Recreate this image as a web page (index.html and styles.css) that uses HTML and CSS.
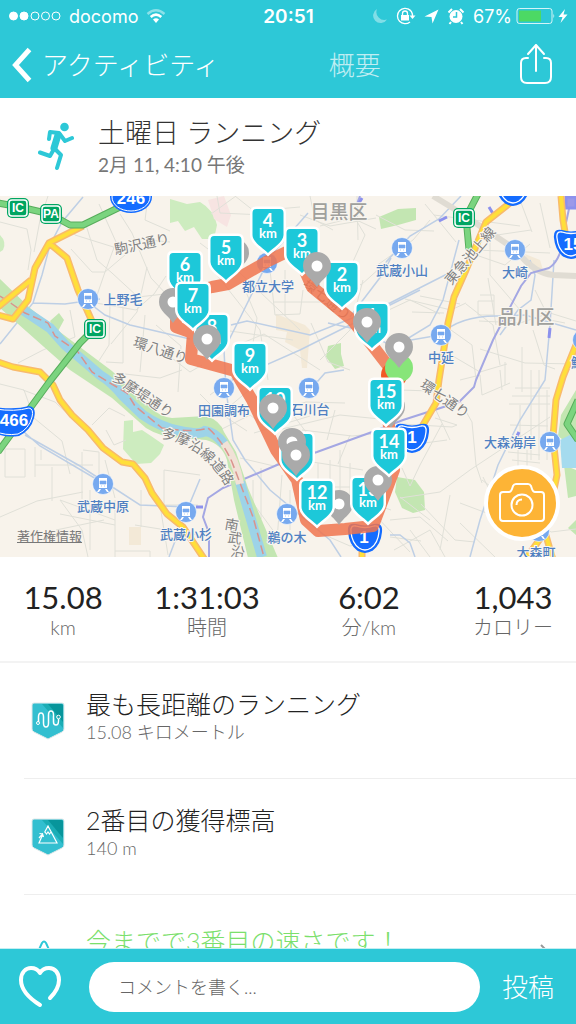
FILE: index.html
```html
<!DOCTYPE html>
<html lang="ja">

<head>
    <meta charset="UTF-8">
    <meta name="viewport" content="width=device-width, initial-scale=1.0">
    <title>土曜日 ランニング</title>
    <link rel="stylesheet" href="styles.css">
</head>

<body>
    <header class="top">
        <div class="status">
            <div class="status-left">
                <svg width="52" height="12" viewBox="0 0 52 12" fill="none" stroke="#fff">
                    <g fill="#fff"><circle cx="4.5" cy="6" r="4"/><circle cx="15" cy="6" r="4"/></g>
                    <circle cx="26" cy="6" r="4"/><circle cx="36.500" cy="6" r="4"/><circle cx="47" cy="6" r="4"/>
                </svg>
                <span>docomo</span>
                <svg width="20" height="16" viewBox="0 0 20 16" fill="none" stroke="#fff" stroke-width="2.500">
                    <path d="M1.500 6Q10-1.500 18.500 6" opacity=".45"/>
                    <path d="M4.700 9Q10 4.300 15.300 9"/>
                    <path d="M7 11.500Q10 9 13 11.500L10 15Z" fill="#fff" stroke="none"/>
                </svg>
            </div>
            <time class="clock">20:51</time>
            <div class="status-right">
                <svg width="16" height="16" viewBox="0 0 16 16"><path d="M5 1A7.500 7.500 0 1 0 15 11.500A8 8 0 0 1 5 1Z" fill="#fff" opacity=".4"/></svg>
                <svg width="20" height="18" viewBox="0 0 20 18" fill="none" stroke="#fff" stroke-width="1.300">
                    <path d="M14 3A7.700 7.700 0 1 0 14 15M12 1.800A7.700 7.700 0 0 1 16.500 9"/>
                    <path d="M13.500 8.500H19.500L16.500 12Z" fill="#fff" stroke="none"/>
                    <rect x="5" y="8" width="8" height="5.500" fill="#fff" stroke="none"/>
                    <path d="M6.500 8V6.500A2.500 2.500 0 0 1 11.500 6.500V8"/>
                </svg>
                <svg width="15" height="15" viewBox="0 0 15 15"><path d="M14.500 .5L8.500 14.500L7.500 8L.5 7.500Z" fill="#fff"/></svg>
                <svg width="18" height="18" viewBox="0 0 18 18">
                    <circle cx="9" cy="9.500" r="6.500" fill="#fff"/>
                    <path d="M1.500 5.500L5 2M16.500 5.500L13 2M4 15L2.500 17M14 15L15.500 17" stroke="#fff" stroke-width="2"/>
                    <path d="M9.500 5V10H6" stroke="#2dc8d7" stroke-width="1.500" fill="none"/>
                </svg>
                <span>67%</span>
                <svg width="52" height="18" viewBox="0 0 52 18">
                    <rect x="1" y="1.500" width="35" height="15" rx="2.500" fill="none" stroke="#fff" stroke-opacity=".8"/>
                    <rect x="3" y="3.500" width="22" height="11" fill="#4cd964"/>
                    <path d="M37.500 6.500Q39 9 37.500 11.500Z" fill="#fff"/>
                    <path d="M49 2L42.500 10H46.500L44.500 16L51.500 7.500H47.500Z" fill="#fff"/>
                </svg>
            </div>
        </div>
        <nav class="nav">
            <a class="back" href="#">
                <svg width="20" height="36" viewBox="0 0 20 36"><path d="M17.500 2.500L3.500 18L17.500 33.500" fill="none" stroke="#fff" stroke-width="5"/></svg>
                アクティビティ
            </a>
            <h1>概要</h1>
            <button class="share" aria-label="共有">
                <svg width="32" height="44" viewBox="0 0 32 44" fill="none" stroke="#fff" stroke-width="2" stroke-linecap="round" stroke-linejoin="round">
                    <path d="M8 15H6Q1 15 1 20V34Q1 40 7 40H25Q31 40 31 34V20Q31 15 26 15H24M16 28V2M8 11L16 2L24 11"/>
                </svg>
            </button>
        </nav>
    </header>

    <main>
        <section class="title">
            <svg width="36" height="50" viewBox="0 0 36 50" fill="none" stroke="#2dc8d7" stroke-width="4" stroke-linecap="round" stroke-linejoin="round">
                <circle cx="26.500" cy="5" r="4.300" fill="#2dc8d7" stroke="none"/>
                <path d="M11 17L12 10L21 11L27 19L34 16M16 26L23 33L19 46M16 27L12 34L2 30.500"/>
                <path d="M20 13L16 26" stroke-width="7"/>
            </svg>
            <div>
                <h2>土曜日 ランニング</h2>
                <p>2月 11, 4:10 午後</p>
            </div>
        </section>

        <section class="map">
            <svg class="map-img" viewBox="0 196 576 361">
                <defs>
                    <path id="shield" d="M-12 0H12Q15.500 0 15.500 4V26C15.500 33 5 39 0 44C-5 39-15.500 33-15.500 26V4Q-15.500 0-12 0Z"/>
                    <g id="pin">
                        <path d="M0-14A14 14 0 0 1 14 0C14 9 5 13 0 21C-5 13-14 9-14 0A14 14 0 0 1 0-14Z" fill="#aaa"/>
                        <circle r="5.500" fill="#fff"/>
                    </g>
                    <g id="train">
                        <circle r="10.500" fill="#77a9ef" stroke="#fff" stroke-opacity=".6"/>
                        <path d="M-4-6H4V4H-4ZM-4 5L-6 8H-4L-2 5ZM4 5L6 8H4L2 5Z" fill="#fff"/>
                        <path d="M-3-3H3V0H-3ZM-2 2H-1M1 2H2" fill="#77a9ef" stroke="#77a9ef" stroke-width=".6"/>
                    </g>
                    <g id="exit">
                        <rect x="-11" y="-10" width="22" height="20" rx="5" fill="#00a562"/>
                        <rect x="-9" y="-8" width="18" height="16" rx="3" fill="none" stroke="#fff" stroke-width="1.500"/>
                    </g>
                    <g id="route">
                        <path d="M-9-13Q0-10 9-13Q17-15 16-6Q15 6 7 12Q0 16-7 12Q-15 6-16-6Q-17-15-9-13Z" fill="#146cff" stroke="#146cff" stroke-width="2"/>
                        <path d="M-9-12Q0-9 9-12Q15-13 14-6Q13 5 6 10Q0 14-6 10Q-13 5-14-6Q-15-13-9-12Z" fill="none" stroke="#fff" stroke-width="1.300"/>
                    </g>
                    <path id="riverside" d="M161 438Q200 444 224 483"/>
                </defs>
                <rect y="196" width="576" height="361" fill="#f8f3eb"/>

                <!-- parks -->
                <g fill="#cdecbf">
                    <path d="M170 199L187 204L200 202Q214 210 217 225L214 239H202L194 227L185 231L178 221L170 223Z"/>
                    <path d="M124 421L133 420V432L142 430L151 436L164 445L160 454L151 463L136 464L123 449Z"/>
                    <path d="M0 235Q7 242 3 250L0 252Z"/>
                </g>
                <g fill="#c3e6b2">
                    <path d="M379 217L398 209L416 208V220L398 225L381 229Z"/>
                    <path d="M328 346L341 343V354L344 366L335 369L326 357Z"/>
                    <path d="M397 477L415 480L424 492L425 510L413 513L402 508L395 492Z"/>
                    <path d="M564 465L576 470V496L568 498ZM576 390V450L558 436L561 415ZM568 528L576 520V535ZM50 321L59 313L64 320L57 333Z"/>
                </g>
                <path d="M276 314L305 325L310 330L307 368H302L300 350L285 342L287 332L276 330ZM525 254L540 260L544 273L528 267ZM129 527H141V545H129Z" fill="#f3e9d7"/>
                <path d="M560 440L576 432V468H562Z" fill="#a5dbee"/>
                <path d="M208 200L224 196L231 215L227 227L214 219Z" fill="#f7e4e2"/>

                <!-- minor streets -->
                <g fill="none" stroke="#e0e0d8" stroke-width="1">
                    <path d="M0 222L27 229L31 250L28 270M60 212L75 235L123 250L137 239L170 242M86 225L97 260L112 273L138 297L200 290M99 204L116 242L105 272L95 301M120 214L132 233L151 278L170 298M48 196L40 220L34 252M148 196L145 220L170 231M71 249L92 272L105 272L132 249"/>
                    <path d="M96 303L136 310L154 294L166 276M110 304L109 345L93 370M123 306V363L106 362M147 267L137 312L111 344M70 310L75 337L43 350L18 363M125 374L160 378L182 370M145 315L140 372M168 355L190 372L202 365M156 325L181 346L178 392"/>
                    <path d="M0 384L24 390L34 418L62 441L70 474M23 390L55 402L72 418M92 425L109 408L125 416M106 430L114 445L126 440M5 449H25V477H5ZM35 447V477M41 460V450M35 465H93M52 467V501M83 450L99 452V483M82 452V499M37 501L0 517M37 501L83 492M60 500L82 530L88 557M60 514L115 525M60 500L115 520M56 530L104 520M115 500V557M115 551H150V557M90 490V550M105 460L115 498M164 470L200 475M164 470V505H198M141 490V527M160 505L168 555M135 525L198 535"/>
                    <path d="M217 196L220 213L263 215M235 196L254 211L300 207M211 214L236 196M200 243L240 273L300 330M217 275L260 330L268 380M190 315L230 331L293 340M243 285L257 318L253 343M270 270L275 315L300 314L303 290M273 302H346M285 270V316M311 323L328 362L350 370M300 215L330 226L376 218M350 210L365 235L351 266L327 275M320 226L352 218L376 229M310 196L315 220L333 230M357 196L358 240M320 360L350 330L363 280M332 263L361 285L391 258"/>
                    <path d="M240 344L264 334L320 370M243 370L210 395M200 394L218 412L247 431M260 416L306 402L345 403M285 404L312 440M282 429L340 415L390 420M220 430L250 415L266 427M224 411L260 381M302 430L352 436L393 432M254 433L310 416M240 458L274 466L296 450M300 460L363 470M330 460V515M340 450V520M350 463V510M318 487H370M330 500H375M347 495L391 510M253 480V503L280 540M261 468V519M282 475L277 540M290 490V530M318 463V480M350 435L338 464M335 410L327 440M320 533L350 546L375 540M390 537L421 541M375 515L410 552M400 498L440 492L470 470L550 417M410 530L430 557M394 550L430 530L445 557"/>
                    <path d="M376 215L405 230L434 231M376 266L413 240L430 220M434 215L520 226M425 204L456 242M376 316L410 300L440 314M405 299L451 310L466 303M420 296L460 304M412 312L444 313M476 255L505 265L530 244M490 230V275L520 310M475 250L550 253M480 295H494V315H478V301H494M479 321L520 323L550 313L576 321M488 278L496 325M451 330L472 345L476 380M466 304L493 325L500 365M480 349L525 363L576 364M505 362V385M522 347V392M451 355L480 372L507 364M497 235L531 230M540 203L550 248M520 200L532 232M535 290L550 320L565 323M533 330L544 365L555 369"/>
                    <path d="M400 390L431 391L460 401L472 422L476 465L482 483M435 418L457 425L452 427L402 424M442 424L420 465L410 486L402 468M402 446L447 440M434 406L450 440M482 480L551 532L576 529M483 477L493 497M460 380L480 375L482 395L510 383M500 370L502 390M515 388H550M512 396H550M509 404H550M531 370V460M539 370V460M547 390V460M520 405V446M510 425L548 426M508 452L540 455M512 460L540 463M518 450V466M527 450V468M400 497L430 520M450 495L440 550M460 503L492 515M421 504L455 540L475 542M460 523L495 557M390 520L420 517L448 541"/>
                </g>
                <g fill="none" stroke="#becfe5" stroke-width="1.500">
                    <path d="M83 197L62 222L50 245L42 275L33 303L0 344M33 303L65 304L100 299M88 302L105 315L130 325L190 339M0 411L40 446L103 483M25 435L80 466L140 505L188 507M169 557L185 515L200 479"/>
                    <path d="M308 213L293 230L270 257L240 318L224 350L226 390L233 440L245 460L270 490L330 540L341 557M231 325L247 321L310 335L390 303L451 272M232 380L300 350L420 290M350 317L382 275L391 258M310 390L325 373L344 370M328 323L360 330L388 344L440 335"/>
                    <path d="M461 196L439 219L410 236L386 262M459 240L443 300L430 325L402 342M440 335Q460 315 500 316L525 315L576 330M530 260L535 275L531 300L518 310L500 335M554 260L550 325L545 380L520 420L498 465L480 520L470 557M390 535H400L410 543L415 557"/>
                </g>

                <!-- rail -->
                <path d="M433 196L456 210L486 230Q500 239 516 250Q533 273 553 275L576 276" fill="none" stroke="#e0dcd3" stroke-width="6"/>
                <path d="M572 196Q565 225 561 250Q557 263 549 268L531 273L521 286L493 340L476 380L474 387L459 402L403 420L372 432L317 452L277 465L223 488L208 498L203 517L209 533V557M360 196L357 204" fill="none" stroke="#a4a7e3" stroke-width="2"/>
                <path d="M566 197H576V208H566ZM362 198L359 203M439 221L447 217M489 207L495 217M550 328L549 338M519 432L516 438M196 507H203" fill="#9b99e9" stroke="#8c91ed" stroke-width="3"/>

                <!-- river -->
                <path d="M-2 277L30 308L60 332L112 371L150 407Q160 417 172 418L205 416Q220 420 224 432L236 452L248 488L278 558H248L234 500L227 460Q222 444 206 440L180 438Q160 437 146 428L112 398L70 370L0 308Z" fill="#c3e6b2"/>
                <g fill="none">
                    <path d="M20 308L50 328L65 345L100 375Q112 382 123 396L143 415Q160 427 180 431T205 431Q215 432 224 444M240 482L262 557" stroke="#9dd3e8" stroke-width="10"/>
                    <path d="M224 443Q236 460 240 484" stroke="#f1e1d6" stroke-width="8"/>
                    <path d="M0 296L12 304L25 313L48 323L55 336L78 352L92 372L110 383L127 393L135 406L162 428Q195 433 208 428Q222 440 232 462L253 517L264 557" stroke="#d9938d" stroke-width="1.500" stroke-dasharray="9 4"/>
                </g>

                <!-- trunk roads -->
                <g fill="none" stroke-linejoin="round">
                    <path d="M83 226L49 243L35 268L28 300L13 319L-2 315M49 243L67 258L78 290L95 328M31 280L-2 307M-2 362L13 367L40 372L53 385L60 400L72 415L88 430L103 448L122 462L133 464L145 478L152 493L167 514L183 527L205 560M515 199L486 222L466 270L454 297L448 323L439 380L436 403L420 430M561 196L563 220L568 250M578 340L563 377L556 400L553 437L557 475L545 532L553 560M545 532L527 557M362 540V560" stroke="#f8ba6c" stroke-width="7"/>
                    <path d="M83 226L49 243L35 268L28 300L13 319L-2 315M49 243L67 258L78 290L95 328M31 280L-2 307M-2 362L13 367L40 372L53 385L60 400L72 415L88 430L103 448L122 462L133 464L145 478L152 493L167 514L183 527L205 560M515 199L486 222L466 270L454 297L448 323L439 380L436 403L420 430M561 196L563 220L568 250M578 340L563 377L556 400L553 437L557 475L545 532L553 560M545 532L527 557M362 540V560" stroke="#ffdf3a" stroke-width="4"/>
                    <path d="M-2 203L20 207L50 214L70 225H83L120 207L138 196M95 328L80 343L50 381L-2 452M478 194L466 217L469 250M578 400L567 424L578 440" stroke="#58ad5c" stroke-width="7"/>
                    <path d="M-2 203L20 207L50 214L70 225H83L120 207L138 196M95 328L80 343L50 381L-2 452M478 194L466 217L469 250M578 400L567 424L578 440" stroke="#7bd47f" stroke-width="5"/>
                </g>

                <!-- signs -->
                <use href="#exit" x="18" y="208"/><use href="#exit" x="51" y="214"/><use href="#exit" x="95" y="329"/><use href="#exit" x="464" y="218"/>
                <g class="sign">
                    <text x="18" y="212">IC</text><text x="51" y="218">PA</text><text x="95" y="333">IC</text><text x="464" y="222">IC</text>
                </g>
                <ellipse cx="131" cy="197" rx="21" ry="16" fill="#146cff"/>
                <ellipse cx="131" cy="197" rx="19" ry="14" fill="none" stroke="#fff"/>
                <path d="M-5 407Q15 410 29 406Q37 407 34 418Q31 430 19 436Q5 438-5 433Z" fill="#146cff"/>
                <path d="M-5 409Q15 412 29 408Q34 409 32 417Q29 429 18 434Q5 436-5 431Z" fill="none" stroke="#fff"/>
                <use href="#route" x="412" y="438"/><use href="#route" x="513" y="191"/><use href="#route" x="571" y="244"/>
                <g class="num"><text x="131" y="204">246</text><text x="14" y="426">466</text><text x="412" y="443">1</text><text x="573" y="250">15</text></g>

                <!-- stations -->
                <use href="#train" x="402" y="248"/><use href="#train" x="515" y="250"/><use href="#train" x="441" y="335"/><use href="#train" x="583" y="340"/>
                <use href="#train" x="88" y="299"/><use href="#train" x="103" y="484"/><use href="#train" x="186" y="512"/><use href="#train" x="224" y="388"/>
                <use href="#train" x="309" y="388"/><use href="#train" x="287" y="514"/><use href="#train" x="267" y="263"/><use href="#train" x="550" y="442"/><use href="#train" x="539" y="531"/>
                <g class="station">
                    <text x="402" y="275">武蔵小山</text><text x="515" y="277">大崎</text><text x="441" y="362">中延</text><text x="123" y="304">上野毛</text>
                    <text x="103" y="511">武蔵中原</text><text x="186" y="539">武蔵小杉</text><text x="224" y="415">田園調布</text><text x="310" y="414">石川台</text>
                    <text x="287" y="542">鵜の木</text><text x="268" y="291">都立大学</text><text x="510" y="447">大森海岸</text><text x="536" y="557">大森町</text><text x="584" y="367">鮫洲</text>
                </g>
                <g class="district"><text x="339" y="219">目黒区</text><text x="526" y="324">品川区</text></g>
                <g class="street">
                    <text transform="translate(143 249) rotate(-12)">駒沢通り</text>
                    <text transform="translate(159 355) rotate(18)">環八通り</text>
                    <text transform="translate(140 399) rotate(34)">多摩堤通り</text>
                    <text transform="translate(442 403) rotate(35)">環七通り</text>
                    <text transform="translate(474 259) rotate(-50)">東急池上線</text>
                    <text transform="translate(324 303) rotate(40)">環七通り</text>
                    <text class="along"><textPath href="#riverside">多摩沿線道路</textPath></text>
                    <text transform="translate(231 530) rotate(10)">南</text>
                    <text transform="translate(234 543) rotate(10)">武</text>
                    <text transform="translate(237 557) rotate(10)">沿</text>
                </g>

                <!-- the run -->
                <use href="#route" x="365" y="538"/>
                <g class="num"><text x="364" y="543">1</text></g>
                <path d="M399 380L372 345L352 320L312 287L295 248L268 261L228 284L212 287L176 296V327L193 333L191 359L235 371L252 400L276 450L297 480L306 520L318 531L345 529L373 526L394 470L386 400" fill="none" stroke="#f0744f" stroke-opacity=".85" stroke-width="12" stroke-linejoin="round"/>
                <circle cx="394" cy="375" r="13" fill="#f15a24"/>
                <circle cx="399" cy="368" r="14" fill="#87e579"/>

                <use href="#pin" x="235" y="253"/>
                <use href="#pin" x="339" y="504"/>
                <use href="#pin" x="391" y="407"/>
                <g class="km">
                    <g transform="translate(226 236)"><use href="#shield"/><text y="18">5</text><text class="u" y="29">km</text></g>
                    <g transform="translate(268 209)"><use href="#shield"/><text y="18">4</text><text class="u" y="29">km</text></g>
                    <g transform="translate(302 229)"><use href="#shield"/><text y="18">3</text><text class="u" y="29">km</text></g>
                    <g transform="translate(342 263)"><use href="#shield"/><text y="18">2</text><text class="u" y="29">km</text></g>
                    <g transform="translate(372 304)"><use href="#shield"/><text y="18">1</text><text class="u" y="29">km</text></g>
                    <g transform="translate(185 253)"><use href="#shield"/><text y="18">6</text><text class="u" y="29">km</text></g>
                    <use href="#pin" x="173" y="302"/>
                    <g transform="translate(212 315)"><use href="#shield"/><text y="18">8</text><text class="u" y="29">km</text></g>
                    <g transform="translate(193 284)"><use href="#shield"/><text y="18">7</text><text class="u" y="29">km</text></g>
                    <g transform="translate(250 344)"><use href="#shield"/><text y="18">9</text><text class="u" y="29">km</text></g>
                    <g transform="translate(275 388)"><use href="#shield"/><text y="18">10</text><text class="u" y="29">km</text></g>
                    <g transform="translate(297 434)"><use href="#shield"/><text y="18">11</text><text class="u" y="29">km</text></g>
                    <g transform="translate(317 481)"><use href="#shield"/><text y="18">12</text><text class="u" y="29">km</text></g>
                    <g transform="translate(368 478)"><use href="#shield"/><text y="18">13</text><text class="u" y="29">km</text></g>
                    <use href="#pin" x="378" y="480"/>
                    <use href="#pin" x="399" y="347"/>
                    <g transform="translate(386 380)"><use href="#shield"/><text y="18">15</text><text class="u" y="29">km</text></g>
                    <g transform="translate(389 430)"><use href="#shield"/><text y="18">14</text><text class="u" y="29">km</text></g>
                </g>
                <use href="#pin" x="317" y="266"/><use href="#pin" x="367" y="322"/><use href="#pin" x="207" y="339"/>
                <use href="#pin" x="273" y="408"/><use href="#pin" x="292" y="442"/><use href="#pin" x="296" y="455"/>
            </svg>
            <a class="legal" href="#">著作権情報</a>
            <button class="camera" aria-label="写真を追加">
                <svg width="46" height="40" viewBox="0 0 46 40" fill="none" stroke="#fff" stroke-width="2" stroke-linejoin="round">
                    <path d="M4 9H10Q12 9 13 6L14 3Q15 1 17 1H29Q31 1 32 3L33 6Q34 9 36 9H42Q45 9 45 12V35Q45 38 42 38H4Q1 38 1 35V12Q1 9 4 9Z"/>
                    <circle cx="23" cy="22" r="10.500"/>
                    <path d="M17.500 22Q17.500 16.500 23 16.500"/>
                </svg>
            </button>
        </section>

        <dl class="stats">
            <div><dd>15.08</dd><dt>km</dt></div>
            <div><dd>1:31:03</dd><dt>時間</dt></div>
            <div><dd>6:02</dd><dt>分/km</dt></div>
            <div><dd>1,043</dd><dt>カロリー</dt></div>
        </dl>

        <ul class="records">
            <li>
                <svg class="badge" width="36" height="38" viewBox="0 0 36 38">
                    <path d="M4 1H32Q34 1 34 3V27Q34 29 32 30L18 37L4 30Q2 29 2 27V3Q2 1 4 1Z" fill="#33bfd0" stroke="#e1e8e9"/>
                    <path d="M12 2H31Q33 2 33 4V26Z" fill="#1badb5"/><path d="M18 2H31Q33 2 33 4V20Z" fill="#07959b"/>
                    <path d="M8.500 20V15Q8.500 11 11 11T13.500 15V21Q13.500 25 16 25T18.500 21V13Q18.500 9 21 9T23.500 13V20Q23.500 23 26 23T28.500 19V17" fill="none" stroke="#fff" stroke-width="1.500"/>
                    <circle cx="8" cy="21" r="1.500" fill="none" stroke="#fff"/><circle cx="28.500" cy="15" r="1.800" fill="none" stroke="#fff"/>
                </svg>
                <div><h3>最も長距離のランニング</h3><p>15.08 キロメートル</p></div>
            </li>
            <li>
                <svg class="badge" width="36" height="38" viewBox="0 0 36 38">
                    <path d="M4 1H32Q34 1 34 3V27Q34 29 32 30L18 37L4 30Q2 29 2 27V3Q2 1 4 1Z" fill="#33bfd0" stroke="#e1e8e9"/>
                    <path d="M12 2H31Q33 2 33 4V26Z" fill="#1badb5"/><path d="M18 2H31Q33 2 33 4V20Z" fill="#07959b"/>
                    <path d="M12.500 17L9 25H27L18 8L14.500 14.500M15 14L16.500 16L18 14L19.500 16L21 14M9 20L12.500 16L13.500 19M9.500 15.500L13 16" fill="none" stroke="#fff" stroke-width="1.200"/>
                </svg>
                <div><h3>2番目の獲得標高</h3><p>140 m</p></div>
            </li>
            <li class="fast">
                <svg class="badge" width="36" height="28" viewBox="0 0 36 28"><path d="M2 26L12 4Q14 1 16 4L26 26" fill="none" stroke="#2dc8d7" stroke-width="2" stroke-linejoin="round"/></svg>
                <div><h3>今までで3番目の速さです！</h3><p>5 km</p></div>
                <svg class="more" width="10" height="18" viewBox="0 0 10 18"><path d="M1 1L9 9L1 17" fill="none" stroke="#999" stroke-width="2"/></svg>
            </li>
        </ul>
    </main>

    <form class="comment">
        <button class="like" type="button" aria-label="いいね">
            <svg width="44" height="42" viewBox="0 0 44 42"><path d="M22 39C14 34 3 25 3 14C3 6 8 2 13 2Q19 2 22 7Q25 2 31 2C37 2 41 7 41 14C41 21 37 27 32 32" fill="none" stroke="#fff" stroke-width="4" stroke-linecap="round" stroke-linejoin="round"/></svg>
        </button>
        <input type="text" placeholder="コメントを書く..." aria-label="コメント">
        <button class="send" type="button">投稿</button>
    </form>
</body>

</html>
```
FILE: styles.css
```css
* {
    margin: 0;
    padding: 0;
    box-sizing: border-box;
}

body {
    display: flex;
    flex-direction: column;
    height: 100vh;
    background-color: #fff;
    font-family: Lato, 'Noto Sans CJK JP', sans-serif;
    font-weight: 300;
    color: #222;
}

svg {
    display: block;
    flex: none;
}

button {
    border: none;
    background: none;
    color: #fff;
    font: inherit;
    cursor: pointer;
}

/* 上部バー */
.top {
    flex: none;
    background-color: #2dc8d7;
    color: #fff;
}

.status {
    display: grid;
    grid-template-columns: 1fr auto 1fr;
    align-items: center;
    height: 32px;
    padding: 0 8px 0 9px;
    font: 400 18px Inter, sans-serif;
}

.status-left,
.status-right {
    display: flex;
    align-items: center;
    gap: 8px;
}

.status-right {
    justify-content: flex-end;
}

.status-right span {
    margin-right: -4px;
}

.clock {
    font-size: 19px;
    font-weight: 600;
}

.nav {
    display: flex;
    align-items: center;
    height: 66px;
}

.back {
    display: flex;
    align-items: center;
    gap: 10px;
    padding-left: 12px;
    color: #fff;
    font-size: 26px;
    line-height: 36px;
    text-decoration: none;
}

.nav h1 {
    flex: 1;
    text-align: center;
    font-size: 26px;
    font-weight: 300;
    line-height: 36px;
    opacity: .7;
}

.share {
    display: flex;
    justify-content: flex-end;
    width: 86px;
    padding-right: 24px;
}

main {
    flex: 1;
    min-height: 0;
    overflow: hidden;
}

.title {
    display: flex;
    align-items: center;
    gap: 24px;
    height: 98px;
    padding-left: 38px;
}

.title h2 {
    font-size: 27px;
    font-weight: 300;
    line-height: 36px;
    color: #333;
}

.title p {
    font-family: Lato, 'Noto Sans CJK JP', sans-serif;
    font-size: 19px;
    font-weight: 400;
    line-height: 28px;
    color: #777;
}

/* 地図 */
.map {
    position: relative;
}

.map-img {
    width: 100%;
    height: auto;
}

.map-img text {
    text-anchor: middle;
}

.map-img .along {
    text-anchor: start;
}

.sign {
    font: 700 12px 'Liberation Sans', sans-serif;
    fill: #fff;
}

.num {
    font: 700 17px 'Liberation Sans', sans-serif;
    fill: #fff;
}

.station,
.district,
.street {
    font: 500 13px 'Noto Sans CJK JP', sans-serif;
    fill: #4f80c2;
    stroke: #f9f6f0;
    stroke-width: 2px;
    paint-order: stroke;
}

.district {
    font-size: 19px;
    fill: #a0a09c;
}

.street {
    font-size: 14px;
    font-weight: 400;
    fill: #808080;
}

.km use[href="#shield"] {
    fill: #1dc8d9;
    stroke: #fff;
    stroke-width: 5px;
    paint-order: stroke;
}

.km text {
    font: 700 18px Lato, sans-serif;
    fill: #fff;
}

.km .u {
    font-size: 13px;
}

.legal {
    position: absolute;
    left: 17px;
    bottom: 12px;
    font-size: 13px;
    font-weight: 400;
    line-height: 18px;
    color: #777;
}

.camera {
    position: absolute;
    right: 16px;
    bottom: 16px;
    display: flex;
    align-items: center;
    justify-content: center;
    width: 76px;
    height: 76px;
    border: 4px solid #fff;
    border-radius: 50%;
    background-color: #fdb436;
}

/* 数値 */
.stats {
    display: grid;
    grid-template-columns: 7fr 9fr 9fr 7fr;
    height: 106px;
    padding-top: 22px;
    border-bottom: 2px solid #f3f3f3;
    text-align: center;
}

.stats dd {
    font-size: 31px;
    font-weight: 400;
    line-height: 36px;
}

.stats dt {
    font-size: 20px;
    line-height: 24px;
    color: #666;
}

.records {
    list-style-type: none;
}

.records li {
    display: flex;
    align-items: center;
    gap: 20px;
    height: 116px;
    margin-left: 24px;
    padding: 0 26px 0 6px;
    border-bottom: 1px solid #eee;
}

.records div {
    padding-bottom: 10px;
}

.records h3 {
    font-size: 25px;
    font-weight: 300;
    line-height: 32px;
}

.records p {
    font-size: 18px;
    line-height: 24px;
    color: #666;
}

/* 3件目は下のバーに隠れる */
.records .fast div {
    padding-bottom: 0;
}

.fast h3 {
    color: #7be06c;
}

.more {
    margin-left: auto;
}

/* コメント欄 */
.comment {
    display: flex;
    flex: none;
    align-items: center;
    height: 76px;
    padding: 0 22px 0 18px;
    border-top: 1px solid #c4eef2;
    background-color: #2dc8d7;
}

.comment input {
    flex: 1;
    min-width: 0;
    height: 50px;
    margin: 0 22px 0 27px;
    padding: 0 29px;
    border: none;
    border-radius: 25px;
    outline: none;
    background-color: #fff;
    font: inherit;
    font-size: 18px;
}

.comment input::placeholder {
    color: #666;
}

.send {
    font-size: 26px;
    line-height: 36px;
}
```
